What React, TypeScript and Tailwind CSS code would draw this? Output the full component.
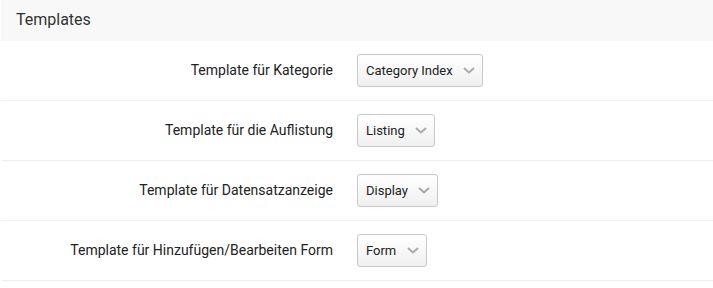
import React from "react";

const rows = [
  { label: "Template für Kategorie", value: "Category Index", w: "w-[126px]" },
  { label: "Template für die Auflistung", value: "Listing", w: "w-[78px]" },
  { label: "Template für Datensatzanzeige", value: "Display", w: "w-[81px]" },
  { label: "Template für Hinzufügen/Bearbeiten Form", value: "Form", w: "w-[70px]" },
];

function Chevron() {
  return (
    <svg width="12" height="7" viewBox="0 0 12 7" className="shrink-0">
      <polyline points="1,1 6,5.5 11,1" fill="none" stroke="#aaaaaa" strokeWidth="2" />
    </svg>
  );
}

export default function App() {
  return (
    <div className="w-[713px] h-[288px] bg-white pl-px" style={{ fontFamily: "Roboto, 'Liberation Sans', sans-serif" }}>
      <div className="h-[41px] bg-[#f8f8f8] flex items-center pl-[15px] pb-[2px] text-[16px] text-[#333]">Templates</div>
      {rows.map((r) => (
        <div key={r.label} className="h-[60px] border-b border-[#eeeeee] flex items-center">
          <div className="w-[332px] text-right text-[14px] text-[#222]">{r.label}</div>
          <div className="pl-[24px]">
            <div className={`${r.w} h-[33px] rounded-[3px] border border-[#c8c8c8] bg-gradient-to-b from-white to-[#f0f0f0] flex items-center justify-between pl-[8px] pr-[7px] text-[13px] text-[#222]`}>
              <span>{r.value}</span>
              <Chevron />
            </div>
          </div>
        </div>
      ))}
    </div>
  );
}
